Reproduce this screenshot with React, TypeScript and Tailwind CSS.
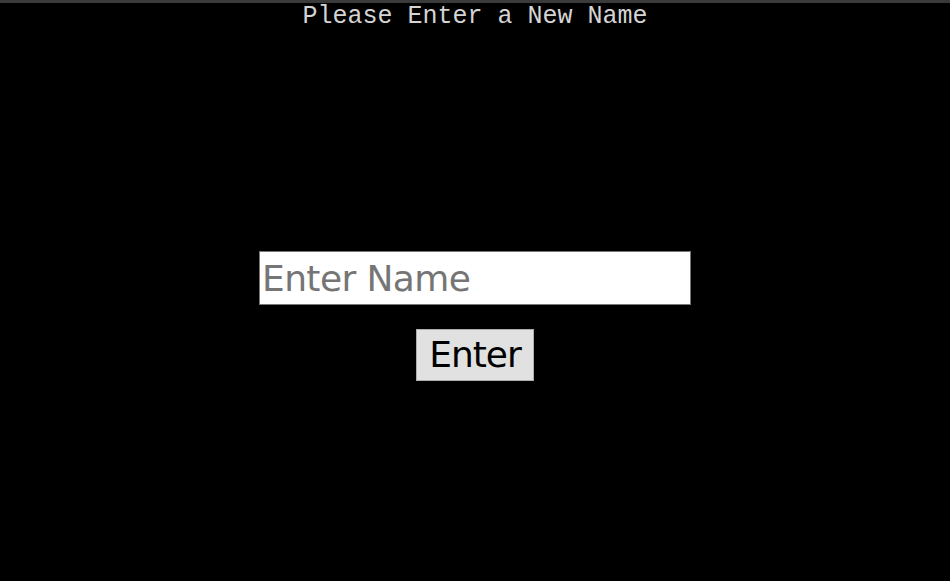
import React from "react";

const App: React.FC = () => {
  return (
    <div className="min-h-[581px] w-full bg-black flex flex-col">
      <div className="h-[3px] bg-[#3a3a3a]" />
      <h1 className="text-center text-[#d4d4d4] text-[25px] leading-[26px] font-['Liberation_Mono','Courier_New',monospace] mt-[1px]">
        Please Enter a New Name
      </h1>
      <form className="flex flex-col items-center mt-[221px]">
        <label htmlFor="name" className="sr-only">
          Name
        </label>
        <input
          type="text"
          id="name"
          placeholder="Enter Name"
          className="w-[432px] h-[54px] bg-white border border-[#767676] px-[2px] text-[36px] leading-[48px] text-black placeholder:text-[#757575] font-['DejaVu_Sans',sans-serif] tracking-[-0.6px] outline-none"
        />
        <button
          type="submit"
          className="mt-[24px] w-[118px] h-[52px] bg-[#e1e1e1] border border-[#adadad] text-[36px] text-black font-['DejaVu_Sans',sans-serif] tracking-[-1px] leading-none"
        >
          Enter
        </button>
      </form>
    </div>
  );
};

export default App;
